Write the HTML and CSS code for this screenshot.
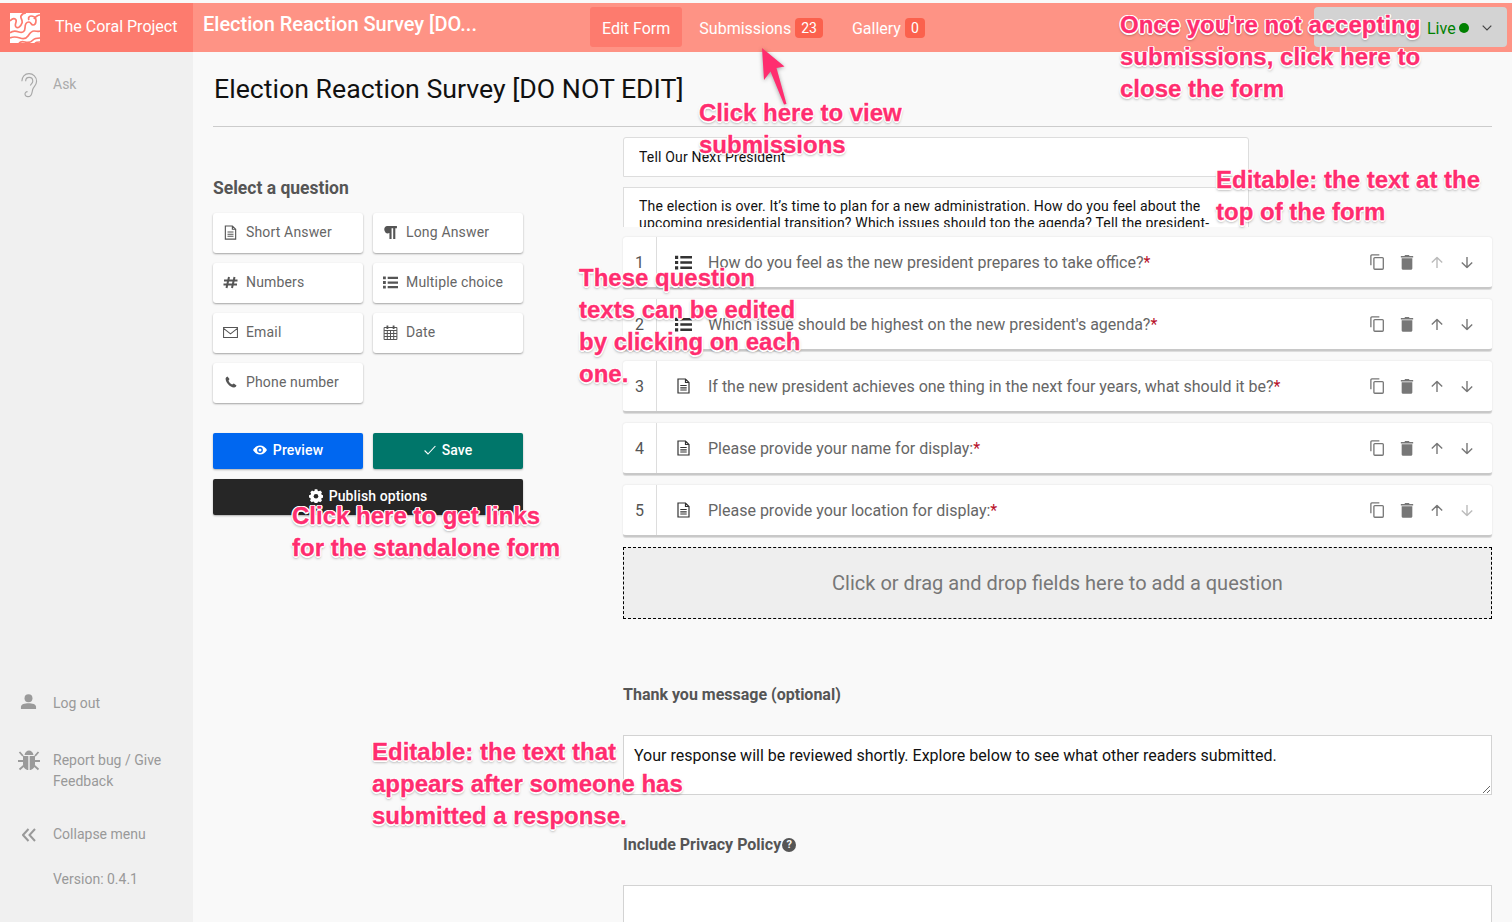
FILE: index.html
```html
<!DOCTYPE html>
<html lang="en">
<head>
<meta charset="utf-8">
<title>Election Reaction Survey</title>
<link rel="stylesheet" href="styles.css">
</head>
<body>
<svg class="sprites" width="0" height="0" aria-hidden="true">
  <symbol id="i-doc" viewBox="0 0 14 16"><path d="M1.500 1h7.500l3.500 3.500V15h-11zM9 1v3.500h3.500M3.800 7.500h6.400M3.800 9.800h6.400M3.800 12h6.400" fill="none" stroke="currentColor" stroke-width="1.200"/></symbol>
  <symbol id="i-list" viewBox="0 0 16 14"><path d="M5 2h11M5 7h11M5 12h11" stroke="currentColor" stroke-width="2.400" fill="none"/><path d="M0 .6h3v3H0zM0 5.500h3v3H0zM0 10.500h3v3H0z" fill="currentColor"/></symbol>
  <symbol id="i-copy" viewBox="0 0 16 17"><path d="M10.500 1H2.500a1 1 0 0 0-1 1v10" fill="none" stroke="currentColor" stroke-width="1.400"/><rect x="4.700" y="3.900" width="10" height="12.300" rx="1" fill="none" stroke="currentColor" stroke-width="1.400"/></symbol>
  <symbol id="i-trash" viewBox="0 0 12 15"><path d="M1 4h10v9.500a1.300 1.300 0 0 1-1.300 1.300H2.300A1.300 1.300 0 0 1 1 13.500zM0 1.800h3.500L4.300 1h3.400l.8.800H12v1.400H0z" fill="currentColor"/></symbol>
  <symbol id="i-up" viewBox="0 0 12 12"><path d="M6 11.500V1M.8 6 6 1l5.200 5" fill="none" stroke="currentColor" stroke-width="1.400"/></symbol>
  <symbol id="i-down" viewBox="0 0 12 12"><path d="M6 .5V11M.8 6 6 11l5.200-5" fill="none" stroke="currentColor" stroke-width="1.400"/></symbol>
</svg>

<header class="topbar">
  <div class="brand">
    <svg class="logo" viewBox="0 0 30 30">
      <rect width="30" height="30" fill="#fff"/>
      <path d="M0 8C3 5 5 5 6 7S4 12 6 14 11 13 12 10 10 5 11 3 14 0 16 0M0 20c3-3 6-2 9-1s6 0 6-4 2-6 4-6 2 3 4 3 3-2 3-5-3-4-5-4-3 2-2 4M0 25c4-2 7-1 10 0s6 1 8-2 3-5 6-5 3 1 6 0M9 30c1-1 3-2 6-1s6 0 8-2 4-2 7-2M25 30c1-1 3-1 5-1M24 6c1-2 4-4 6-4" fill="none" stroke="#fd7b6e" stroke-width="1.700"/>
    </svg>
    <span class="brand-name">The Coral Project</span>
  </div>
  <div class="bar-main">
    <div class="form-name">Election Reaction Survey [DO...</div>
    <nav class="tabs">
      <a class="tab active">Edit Form</a>
      <a class="tab">Submissions <b class="count">23</b></a>
      <a class="tab">Gallery <b class="count">0</b></a>
    </nav>
    <div class="status">
      <span class="live">Live</span><i class="dot"></i>
      <svg class="chev" viewBox="0 0 10 6"><path d="M.7.7 5 5 9.300.7" fill="none" stroke="#444" stroke-width="1.200"/></svg>
    </div>
  </div>
</header>

<div class="shell">
  <aside class="sidebar">
    <a class="side-item ask">
      <svg class="side-icon" viewBox="0 0 20 28"><path d="M3 9.500C3 5 6 1.500 10.500 1.500S18.500 5 18.500 9.500c0 4-3 5.500-4 8.500-.8 2.500-.5 4.500-2 6.300-1.700 2-5 2-6-.3-.7-1.500.5-3.500 2.500-3.500M7 9.500c0-2.500 1.500-4 3.700-4s3.800 1.800 3.800 4c0 2-2 3-2.500 4.500" fill="none" stroke="#a8a8a8" stroke-width="1.200"/></svg>
      <span>Ask</span>
    </a>
    <div class="side-bottom">
      <a class="side-item logout">
        <svg class="side-icon" viewBox="0 0 18 18"><circle cx="9" cy="4.500" r="4.200" fill="#9a9a9a"/><path d="M1 16v-2.500C1 11 5 9.800 9 9.800s8 1.200 8 3.700V16z" fill="#9a9a9a"/></svg>
        <span>Log out</span>
      </a>
      <a class="side-item bug">
        <svg class="side-icon bug-icon" viewBox="0 0 22 22"><path d="M6.500 6C7 3 9 1.500 11 1.500S15 3 15.500 6zM5 7h5.300v14C7.500 21 5 18.500 5 15zM17 7h-5.300v14c2.800 0 5.300-2.500 5.300-6z" fill="#9a9a9a"/><path d="M1.500 3 5 7M20.500 3 17 7M0 12h5M22 12h-5M1.500 20.500 6 16.500M20.500 20.500 16 16.500" stroke="#9a9a9a" stroke-width="1.800" fill="none"/></svg>
        <span>Report bug / Give Feedback</span>
      </a>
      <a class="side-item collapse">
        <svg class="side-icon" viewBox="0 0 14 14"><path d="M6.500 1 1 7l5.500 6M13 1 7.500 7l5.500 6" fill="none" stroke="#999" stroke-width="2"/></svg>
        <span>Collapse menu</span>
      </a>
      <div class="version">Version: 0.4.1</div>
    </div>
  </aside>

  <main class="main">
    <h1 class="title">Election Reaction Survey [DO NOT EDIT]</h1>
    <div class="columns">
      <section class="palette">
        <h2 class="palette-head">Select a question</h2>
        <div class="palette-grid">
          <button class="field-btn"><svg class="field-icon" viewBox="0 0 14 16"><use href="#i-doc"/></svg>Short Answer</button>
          <button class="field-btn"><svg class="field-icon" viewBox="0 0 14 14"><path d="M3.500 1H13v2h-1.500v10H9.500V3H8v10H6V7.500a3.300 3.300 0 0 1-2.500-6.500z" fill="currentColor"/></svg>Long Answer</button>
          <button class="field-btn"><svg class="field-icon" viewBox="0 0 15 13"><path d="M6 1 3.500 12M11.500 1 9 12M1 4.500h13.500M.5 8.500H14" fill="none" stroke="currentColor" stroke-width="2"/></svg>Numbers</button>
          <button class="field-btn"><svg class="field-icon" viewBox="0 0 16 14"><use href="#i-list"/></svg>Multiple choice</button>
          <button class="field-btn"><svg class="field-icon" viewBox="0 0 16 12"><path d="M.6.600h14.800v10.800H.6zM.6 1.500 8 7.500l7.400-6" fill="none" stroke="currentColor" stroke-width="1.100"/></svg>Email</button>
          <button class="field-btn"><svg class="field-icon" viewBox="0 0 14 15"><path d="M.6 2.500h12.800v12H.6zM.6 5.500h12.800M3.800 5.500v9M7 5.500v9M10.200 5.500v9M.6 8.500h12.800M.6 11.500h12.800" fill="none" stroke="currentColor" stroke-width="1"/><path d="M3 .5h1.800v3.500H3zM9.200.5H11v3.500H9.200z" fill="currentColor"/></svg>Date</button>
          <button class="field-btn"><svg class="field-icon phone" viewBox="0 0 12 12"><path d="M2.500.5 4.500 3 3.500 4.700c.6 1.500 2 3 3.600 3.800L8.800 7.500 11.500 9.600c-.3 1.200-1.500 2-2.500 1.900C4.800 11 1 7 .6 3 .5 2 1.300.8 2.500.5z" fill="currentColor"/></svg>Phone number</button>
        </div>
        <div class="actions">
          <button class="action preview"><svg class="act-icon" viewBox="0 0 14 10"><path d="M7 .5C4 .5 1.500 2.300 0 5c1.500 2.700 4 4.500 7 4.500s5.500-1.800 7-4.500C12.500 2.300 10 .5 7 .5z" fill="#fff"/><circle cx="7" cy="5" r="2.900" fill="#0067f0"/><circle cx="7" cy="5" r="1.500" fill="#fff"/></svg>Preview</button>
          <button class="action save"><svg class="act-icon" viewBox="0 0 12 10"><path d="M.6 5.500 4 9l7.400-8" fill="none" stroke="#fff" stroke-width="1.100"/></svg>Save</button>
          <button class="action publish"><svg class="act-icon" viewBox="0 0 14 14"><path d="M5.700.2h2.600l.4 1.600 1.100.5 1.500-.8 1.700 1.700-.8 1.500.5 1.100 1.600.4v2.400l-1.600.4-.5 1.100.8 1.500-1.700 1.700-1.500-.8-1.100.5-.4 1.600H5.700l-.4-1.600-1.100-.5-1.500.8L1 11.600l.8-1.500-.5-1.100L0 8.600V6.200l1.600-.4.500-1.100-.8-1.500L3 1.500l1.500.8 1.100-.5z" fill="#fff"/><circle cx="7" cy="7.300" r="2.300" fill="#262626"/></svg>Publish options</button>
        </div>
      </section>

      <section class="editor">
        <div class="intro">
          <input class="headline" value="Tell Our Next President" aria-label="Headline">
          <div class="description">The election is over. It’s time to plan for a new administration. How do you feel about the upcoming presidential transition? Which issues should top the agenda? Tell the president-elect what you think.</div>
        </div>
        <ol class="questions">
          <li class="question"><span class="q-num">1</span><svg class="q-icon" viewBox="0 0 16 14"><use href="#i-list"/></svg><span class="q-text">How do you feel as the new president prepares to take office?<em>*</em></span>
            <span class="q-tools"><svg class="tool" viewBox="0 0 16 17"><use href="#i-copy"/></svg><svg class="tool" viewBox="0 0 12 15"><use href="#i-trash"/></svg><svg class="tool mover off" viewBox="0 0 12 12"><use href="#i-up"/></svg><svg class="tool mover" viewBox="0 0 12 12"><use href="#i-down"/></svg></span></li>
          <li class="question"><span class="q-num">2</span><svg class="q-icon" viewBox="0 0 16 14"><use href="#i-list"/></svg><span class="q-text">Which issue should be highest on the new president's agenda?<em>*</em></span>
            <span class="q-tools"><svg class="tool" viewBox="0 0 16 17"><use href="#i-copy"/></svg><svg class="tool" viewBox="0 0 12 15"><use href="#i-trash"/></svg><svg class="tool mover" viewBox="0 0 12 12"><use href="#i-up"/></svg><svg class="tool mover" viewBox="0 0 12 12"><use href="#i-down"/></svg></span></li>
          <li class="question"><span class="q-num">3</span><svg class="q-icon doc" viewBox="0 0 14 16"><use href="#i-doc"/></svg><span class="q-text">If the new president achieves one thing in the next four years, what should it be?<em>*</em></span>
            <span class="q-tools"><svg class="tool" viewBox="0 0 16 17"><use href="#i-copy"/></svg><svg class="tool" viewBox="0 0 12 15"><use href="#i-trash"/></svg><svg class="tool mover" viewBox="0 0 12 12"><use href="#i-up"/></svg><svg class="tool mover" viewBox="0 0 12 12"><use href="#i-down"/></svg></span></li>
          <li class="question"><span class="q-num">4</span><svg class="q-icon doc" viewBox="0 0 14 16"><use href="#i-doc"/></svg><span class="q-text">Please provide your name for display:<em>*</em></span>
            <span class="q-tools"><svg class="tool" viewBox="0 0 16 17"><use href="#i-copy"/></svg><svg class="tool" viewBox="0 0 12 15"><use href="#i-trash"/></svg><svg class="tool mover" viewBox="0 0 12 12"><use href="#i-up"/></svg><svg class="tool mover" viewBox="0 0 12 12"><use href="#i-down"/></svg></span></li>
          <li class="question"><span class="q-num">5</span><svg class="q-icon doc" viewBox="0 0 14 16"><use href="#i-doc"/></svg><span class="q-text">Please provide your location for display:<em>*</em></span>
            <span class="q-tools"><svg class="tool" viewBox="0 0 16 17"><use href="#i-copy"/></svg><svg class="tool" viewBox="0 0 12 15"><use href="#i-trash"/></svg><svg class="tool mover" viewBox="0 0 12 12"><use href="#i-up"/></svg><svg class="tool mover off" viewBox="0 0 12 12"><use href="#i-down"/></svg></span></li>
        </ol>
        <div class="dropzone">Click or drag and drop fields here to add a question</div>
        <h3 class="label thanks">Thank you message (optional)</h3>
        <textarea class="message" aria-label="Thank you message">Your response will be reviewed shortly. Explore below to see what other readers submitted.</textarea>
        <h3 class="label privacy">Include Privacy Policy<span class="help">?</span></h3>
        <div class="policy"></div>
      </section>
    </div>
  </main>
</div>

<div class="note n-close">Once you're not accepting<br>submissions, click here to<br>close the form</div>
<div class="note n-view">Click here to view<br>submissions</div>
<div class="note n-top">Editable: the text at the<br>top of the form</div>
<div class="note n-edit">These question<br>texts can be edited<br>by clicking on each<br>one.</div>
<div class="note n-links">Click here to get links<br>for the standalone form</div>
<div class="note n-thanks">Editable: the text that<br>appears after someone has<br>submitted a response.</div>
<svg class="arrow" viewBox="0 0 30 60"><path d="M2 1 24.500 19.500 16.500 21 26.500 57 24 57.500 10.500 24.500 4 33z" fill="#ff2d6f"/></svg>
</body>
</html>
```
FILE: styles.css
```css
* { box-sizing: border-box; }
html, body { margin: 0; height: 922px; overflow: hidden; }
body {
  padding-top: 3px;
  background: #f9f9f9;
  font-family: Roboto, "Liberation Sans", sans-serif;
  position: relative;
}
.sprites { position: absolute; }

.topbar { display: flex; height: 49px; color: #fff; }
.brand { width: 193px; background: #fd7b6e; display: flex; align-items: center; padding-left: 10px; }
.logo { width: 30px; height: 30px; }
.brand-name { margin-left: 15px; font-size: 16px; padding-bottom: 2px; }
.bar-main { flex: 1; background: #fe9385; display: flex; align-items: center; position: relative; padding-left: 10px; }
.form-name { width: 387px; font-size: 20px; font-weight: 500; padding-bottom: 7px; }
.tabs { display: flex; align-items: flex-start; align-self: flex-start; margin-top: 4px; }
.tab { height: 40px; padding: 2px 12px 0; display: flex; align-items: center; font-size: 16px; border-radius: 3px; margin-right: 5px; gap: 4px; white-space: nowrap; }
.count { background: #fb614d; border-radius: 4px; font-weight: 400; font-size: 14px; padding: 0 6px; height: 20px; line-height: 20px; }
.tab.active { background: #fd7b6e; }
.status { position: absolute; right: 5px; top: 4px; width: 193px; height: 40px; background: #d3d3d3; border-radius: 4px; display: flex; align-items: center; padding: 2px 0 0 113px; color: #008000; font-size: 16px; }
.dot { width: 10px; height: 10px; border-radius: 50%; background: #008000; margin-left: 3px; }
.chev { width: 10px; height: 6px; margin-left: 13px; }

.shell { display: flex; height: 870px; }
.sidebar { width: 193px; background: #f0f0f0; display: flex; flex-direction: column; color: #999; font-size: 14px; line-height: 21px; }
.side-item { display: flex; align-items: flex-start; padding-left: 53px; position: relative; }
.side-icon { position: absolute; left: 20px; top: 0; width: 18px; height: 18px; }
.ask { margin-top: 22px; color: #aaa; }
.ask .side-icon { left: 19px; top: -2px; width: 19px; height: 27px; }
.side-bottom { margin-top: auto; padding-bottom: 32px; }
.logout { margin-bottom: 36px; }
.logout .side-icon { top: 1px; width: 17px; height: 17px; }
.bug { margin-bottom: 32px; padding-right: 20px; }
.bug .bug-icon { left: 18px; top: -1px; width: 22px; height: 22px; }
.collapse { margin-bottom: 24px; }
.collapse .side-icon { left: 22px; top: 4px; width: 14px; height: 14px; }
.version { padding-left: 53px; }

.main { flex: 1; padding: 0 20px; min-width: 0; }
.title { margin: 0; height: 75px; border-bottom: 1px solid #ccc; font-size: 26.700px; font-weight: 400; line-height: 74px; padding-left: 1px; color: #111; }
.columns { display: flex; padding-top: 10px; }
.palette { width: 410px; flex: none; }
.palette-head { margin: 0; padding-top: 41px; height: 76px; font-size: 17.500px; line-height: 20px; font-weight: 700; color: #555; }
.palette-grid { display: grid; grid-template-columns: 150px 150px; grid-auto-rows: 40px; gap: 10px; }
.field-btn { background: #fff; border: 0; border-radius: 3px; box-shadow: 0 1px 2px rgba(0,0,0,.35); display: flex; align-items: center; padding: 0 0 2px 10px; color: #666; font: 14px Roboto, sans-serif; letter-spacing: .16px; white-space: nowrap; }
.field-icon { width: 15px; height: 15px; margin-right: 8px; color: #555; flex: none; }
.field-icon.phone { width: 12px; height: 12px; margin: 0 9px 0 2px; }
.actions { display: grid; grid-template-columns: 150px 150px; gap: 10px; margin-top: 30px; }
.action { height: 36px; border: 0; border-radius: 2px; padding-bottom: 4px; color: #fff; font: 500 14px Roboto, sans-serif; letter-spacing: .1px; display: flex; align-items: center; justify-content: center; gap: 6px; box-shadow: 0 1px 2px rgba(0,0,0,.3); }
.act-icon { width: 14px; height: 14px; }
.save .act-icon { width: 12px; }
.preview { background: #0067f0; }
.save { background: #00766a; }
.publish { background: #262626; grid-column: span 2; }

.editor { flex: 1; min-width: 0; }
.intro { width: 626px; }
.headline { display: block; width: 100%; height: 40px; border: 1px solid #ddd; border-radius: 3px 3px 0 0; padding: 0 15px; background: #fff; font: 14px Roboto, sans-serif; letter-spacing: .18px; color: #111; outline: 0; }
.description { margin-top: 10px; height: 40px; overflow: hidden; border: 1px solid #ddd; border-bottom: 0; background: #fff; padding: 10px 15px 0; font-size: 14px; line-height: 17px; letter-spacing: .17px; color: #111; }
.questions { list-style: none; margin: 10px 0 0; padding: 0; }
.question { height: 52px; margin-bottom: 10px; background: #fff; border-radius: 3px; border-bottom: 2px solid #c8c8c8; box-shadow: 0 1px 0 #ddd, 0 0 2px rgba(0,0,0,.12); display: flex; align-items: center; color: #666; font-size: 16px; position: relative; }
.q-num { width: 34px; height: 100%; border-right: 1px solid #ddd; display: flex; align-items: center; padding-left: 12px; color: #555; flex: none; }
.q-icon { width: 17px; height: 15px; margin: 0 16px 0 18px; color: #333; flex: none; }
.q-icon.doc { height: 16px; }
.q-text { white-space: nowrap; }
.q-text em { color: #b8102a; font-style: normal; }
.q-tools { margin-left: auto; margin-right: 17px; display: flex; align-items: center; gap: 14px; }
.tool { width: 16px; height: 16px; color: #777; }
.tool.mover { width: 12px; height: 13px; margin: 0 2px; }
.tool.off { color: #bbb; }
.dropzone { height: 72px; border: 1px dashed #000; background: #eee; display: flex; align-items: center; justify-content: center; font-size: 20px; color: #777; }
.label { margin: 0; font-size: 16px; font-weight: 700; color: #555; line-height: 20px; }
.thanks { margin-top: 66px; }
.message { display: block; width: 100%; height: 60px; margin-top: 30px; border: 1px solid #d3d3d3; background: #fff; padding: 10px; font: 16px Roboto, sans-serif; color: #111; outline: 0; resize: vertical; }
.privacy { margin-top: 40px; display: flex; align-items: center; }
.help { width: 14px; height: 14px; margin-left: 1px; border-radius: 50%; background: #555; color: #f9f9f9; font-size: 11px; line-height: 14px; text-align: center; }
.policy { height: 60px; margin-top: 30px; border: 1px solid #d3d3d3; background: #fff; }

.note {
  position: absolute;
  font: 700 24px/32px "Liberation Sans", Arial, sans-serif;
  white-space: nowrap;
  color: #ff2d6f;
  -webkit-text-stroke: .3px #ff2d6f;
  text-shadow: -1.500px 0 0 #fff, 1.500px 0 0 #fff, 0 -1.500px 0 #fff, 0 1.500px 0 #fff, -1px -1px 0 #fff, 1px -1px 0 #fff, -1px 1px 0 #fff, 1px 1px 0 #fff, 0 2px 3px rgba(0,0,0,.5);
}
.n-close { left: 1120px; top: 9px; }
.n-view { left: 699px; top: 97px; }
.n-top { left: 1216px; top: 164px; }
.n-edit { left: 579px; top: 262px; }
.n-links { left: 292px; top: 500px; }
.n-thanks { left: 372px; top: 736px; }
.arrow { position: absolute; left: 760px; top: 47px; width: 30px; height: 60px; filter: drop-shadow(0 1px 2px rgba(0,0,0,.35)); }
```
